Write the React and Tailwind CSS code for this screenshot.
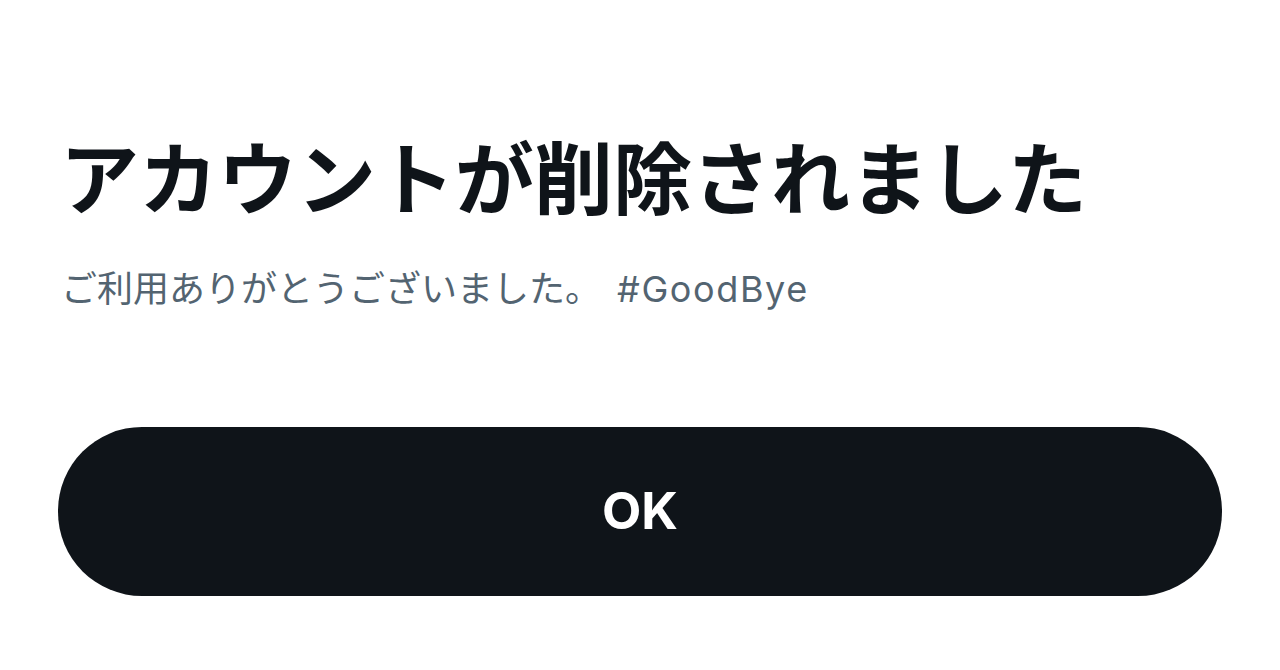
export default function App() {
  return (
    <div className="w-[1280px] h-[670px] bg-white overflow-hidden flex flex-col px-[58px]">
      <h1 className="mt-[127px] pl-[2px] text-[79px] leading-[96px] font-bold text-[#0f1419] whitespace-nowrap font-['Noto_Sans_CJK_JP','Noto_Sans',sans-serif]">
        アカウントが削除されました
      </h1>
      <p className="mt-[44px] pl-[3px] text-[36px] leading-[44px] text-[#536471] whitespace-nowrap font-['Inter','Noto_Sans_CJK_JP',sans-serif]">
        ご利用ありがとうございました。
        <span className="ml-[16px] tracking-[1.6px]">#GoodBye</span>
      </p>
      <button className="mt-[116px] w-[1164px] h-[169px] rounded-[84px] bg-[#0f1419] text-white text-[51px] font-bold flex items-center justify-center font-['Inter','Noto_Sans',sans-serif]">
        OK
      </button>
    </div>
  );
}
